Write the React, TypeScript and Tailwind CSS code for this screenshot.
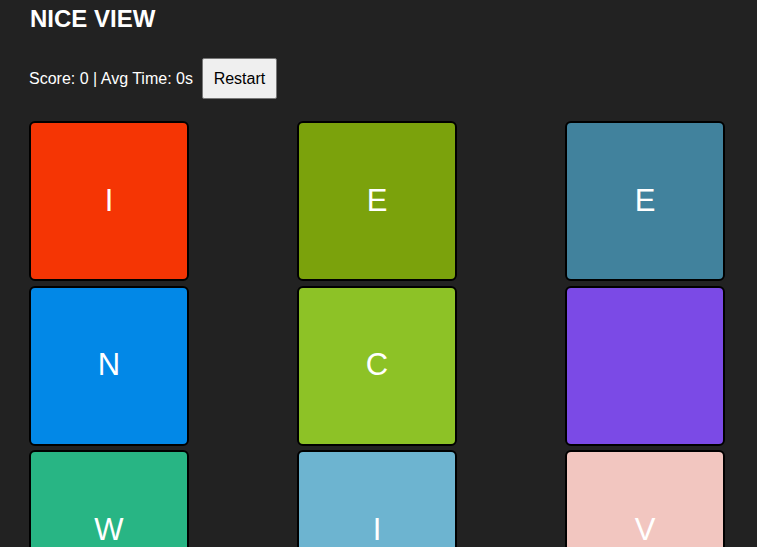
const tiles = [
  { letter: 'I', color: 'bg-[#f53504]' },
  { letter: 'E', color: 'bg-[#7ba20c]' },
  { letter: 'E', color: 'bg-[#41829d]' },
  { letter: 'N', color: 'bg-[#0288e7]' },
  { letter: 'C', color: 'bg-[#8dc226]' },
  { letter: '', color: 'bg-[#7b4ae6]' },
  { letter: 'W', color: 'bg-[#28b584]' },
  { letter: 'I', color: 'bg-[#6db4d0]' },
  { letter: 'V', color: 'bg-[#f2c6c0]' },
];

const App = () => {
  return (
    <div className="min-h-screen bg-[#222222] text-white font-['Liberation_Sans',Arial,sans-serif] pl-[29px] pr-[32px] overflow-hidden h-[547px]">
      <h1 className="mt-[5px] pl-px text-[24px] leading-[28px] font-bold">NICE VIEW</h1>

      {/* Score bar */}
      <div className="mt-[25px] flex items-center">
        <span className="text-[16px] leading-[18px]">Score: 0 | Avg Time: 0s</span>
        <button className="ml-[9px] h-[41px] w-[75px] rounded-[2px] border border-[#767676] bg-[#efefef] text-[16px] leading-[18px] text-black">
          Restart
        </button>
      </div>

      {/* Tiles */}
      <div className="mt-[22px] grid grid-cols-[repeat(3,160px)] justify-between gap-y-[4.5px]">
        {tiles.map((tile, index) => (
          <div
            key={index}
            className={`${tile.color} h-[160px] w-[160px] rounded-[6px] border-2 border-black flex items-center justify-center text-[31px] text-white`}
          >
            {tile.letter}
          </div>
        ))}
      </div>
    </div>
  );
};

export default App;
